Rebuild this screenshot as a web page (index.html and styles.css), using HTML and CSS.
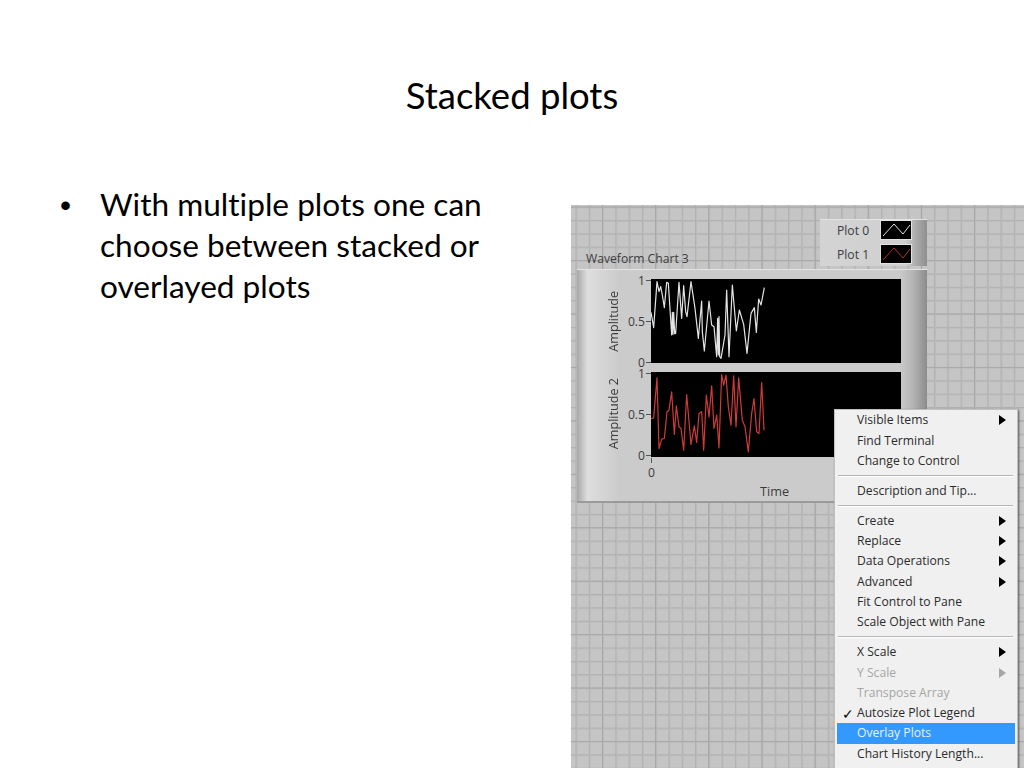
FILE: index.html
```html
<!DOCTYPE html>
<html lang="en">
<head>
<meta charset="utf-8">
<title>Stacked plots</title>
<link rel="stylesheet" href="styles.css">
</head>
<body>
<main class="slide">
  <h1 class="slide-title">Stacked plots</h1>
  <div class="slide-body">
    <ul class="bullets">
      <li>With multiple plots one can choose between stacked or overlayed plots</li>
    </ul>
    <figure class="canvas">
      <div class="legend">
        <div class="legend-row"><span>Plot 0</span>
          <svg class="swatch" viewBox="0 0 30 18"><polyline class="line-white" points="2,15 13,3 22,13 29,4"/></svg></div>
        <div class="legend-row"><span>Plot 1</span>
          <svg class="swatch" viewBox="0 0 30 18"><polyline class="line-red" points="2,15 13,3 22,13 29,4"/></svg></div>
      </div>
      <div class="chart-label">Waveform Chart 3</div>
      <div class="chart">
        <div class="plot-row plot-row-a">
          <div class="y-title"><span>Amplitude</span></div>
          <div class="ticks"><span>1</span><span>0.5</span><span>0</span></div>
          <svg class="plot" viewBox="18 12 750 252"><polyline class="line-white" points="18,112 26,158 36,20 42,50 47,35 52,60 58,98 65,22 70,25 80,180 82,112 84,178 86,112 89,176 92,175 102,22 110,130 116,32 122,110 126,125 138,20 150,100 160,190 170,78 172,170 178,228 192,78 200,150 207,155 215,245 218,130 220,240 222,125 224,245 228,250 240,180 245,45 252,245 262,30 274,168 283,105 296,148 306,235 318,115 328,98 334,172 341,72 348,90 358,38"/></svg>
        </div>
        <div class="plot-row plot-row-b">
          <div class="y-title"><span>Amplitude 2</span></div>
          <div class="ticks"><span>1</span><span>0.5</span><span>0</span></div>
          <svg class="plot" viewBox="18 12 750 252"><polyline class="line-red" points="18,150 26,148 36,28 42,240 50,212 58,210 66,130 72,125 80,70 88,198 94,112 102,175 108,180 116,245 125,78 138,228 148,172 155,222 162,135 170,130 176,245 184,80 192,145 200,52 207,180 215,140 222,238 230,18 236,50 243,20 250,115 258,170 266,22 273,175 281,28 292,155 300,175 310,250 320,135 327,90 335,190 342,195 350,42 357,185"/></svg>
        </div>
        <div class="x-axis"><span class="x-zero">0</span><span class="x-title">Time</span></div>
      </div>
      <div class="menu">
        <div class="item sub">Visible Items</div>
        <div class="item">Find Terminal</div>
        <div class="item">Change to Control</div>
        <hr class="sep">
        <div class="item">Description and Tip...</div>
        <hr class="sep">
        <div class="item sub">Create</div>
        <div class="item sub">Replace</div>
        <div class="item sub">Data Operations</div>
        <div class="item sub">Advanced</div>
        <div class="item">Fit Control to Pane</div>
        <div class="item">Scale Object with Pane</div>
        <hr class="sep">
        <div class="item sub">X Scale</div>
        <div class="item sub off">Y Scale</div>
        <div class="item off">Transpose Array</div>
        <div class="item checked">Autosize Plot Legend</div>
        <div class="item active">Overlay Plots</div>
        <div class="item">Chart History Length...</div>
        <hr class="sep">
      </div>
    </figure>
  </div>
</main>
</body>
</html>
```
FILE: styles.css
```css
html, body { margin: 0; height: 100%; background: #fff; }
.slide { width: 1024px; height: 768px; overflow: hidden; display: flex; flex-direction: column; font-family: Lato, "Liberation Sans", sans-serif; font-variant-ligatures: none; color: #000; }
.slide-title { margin: 0; padding-top: 70px; height: 134px; box-sizing: border-box; text-align: center; font-size: 36.5px; line-height: 50px; font-weight: 400; }
.slide-body { flex: 1; display: flex; min-height: 0; }
.bullets { list-style: none; margin: 0; padding: 50px 0 0 100px; width: 400px; box-sizing: content-box; flex: none; font-size: 31.6px; line-height: 41px; }
.bullets li { position: relative; }
.bullets li::before { content: "•"; position: absolute; left: -40px; top: 1px; font-family: "Liberation Sans", sans-serif; }
.canvas { margin: 71px 0 0 71px; flex: 1; position: relative; overflow: hidden; font-family: "Open Sans", sans-serif; color: #3c3c3c; font-size: 12.15px;
  background-color: #c5c5c5;
  background-image:
    linear-gradient(to right, #a6a6a6 1px, transparent 1px),
    linear-gradient(to bottom, #a9a9a9 1px, transparent 1px),
    linear-gradient(to right, #b1b1b1 1px, #bcbcbc 1px, #bcbcbc 2px, transparent 2px),
    linear-gradient(to bottom, #b1b1b1 1px, #bcbcbc 1px, #bcbcbc 2px, transparent 2px);
  background-size: 53.16px 53.44px, 53.44px 53.44px, 13.29px 13.36px, 13.29px 13.36px;
  background-position: 31px 0, 0 1.6px, 4.5px 0, 0 1.6px; }
.legend { position: absolute; left: 249px; top: 14px; width: 107px; height: 47px; box-sizing: border-box; padding: 0 0 0 17px; display: flex; flex-direction: column; gap: 2px; background: linear-gradient(to right, #d4d4d4, #cfcfcf 80%, #aaa 90%, #8f8f8f); box-shadow: inset 0 1px 0 #e4e4e4; }
.legend-row { display: flex; align-items: center; gap: 12px; height: 22px; }
.swatch { width: 30px; height: 18px; background: #000; box-shadow: 0 0 0 1px #e2e2e2; }
.chart-label { position: absolute; left: 15px; top: 45px; line-height: 18px; }
.chart { position: absolute; left: 6px; top: 64px; width: 350px; height: 234px; box-sizing: border-box; background: linear-gradient(to right, #a8a8a8, #dedede 3%, #cbcbcb 12%, #cbcbcb 92%, #b4b4b4 96%, #8c8c8c); border-top: 1px solid #e4e4e4; border-bottom: 2px solid #9a9a9a; }
.plot-row { position: absolute; left: 0; width: 324px; height: 84px; display: flex; justify-content: flex-end; }
.plot-row-a { top: 9px; }
.plot-row-b { top: 102px; height: 85px; }
.plot { width: 250px; height: 84px; background: #000; flex: none; }
.plot-row-b .plot { height: 85px; }
.ticks { position: relative; width: 0; flex: none; }
.ticks span { position: absolute; right: 6px; line-height: 14px; }
.ticks span::after { content: ""; position: absolute; left: 100%; margin-left: 1px; top: 6px; width: 5px; height: 1px; background: #555; }
.ticks span:nth-child(1) { top: -5px; }
.ticks span:nth-child(2) { top: 36px; }
.ticks span:nth-child(3) { top: 77px; }
.y-title { position: absolute; left: 28px; top: 0; height: 84px; width: 16px; display: flex; align-items: center; justify-content: center; font-size: 12.6px; }
.y-title span { writing-mode: vertical-rl; transform: rotate(180deg); white-space: nowrap; }
.plot polyline { filter: blur(.4px); }
.line-white, .line-red { fill: none; stroke-width: 3.6; stroke-linejoin: round; }
.line-white { stroke: #e4e4e4; }
.line-red { stroke: #cf3a3a; }
.swatch .line-white, .swatch .line-red { stroke-width: 1; }
.swatch .line-red { stroke: #b03030; }
.x-axis { position: absolute; left: 0; top: 195px; width: 100%; height: 30px; }
.x-axis::before { content: ""; position: absolute; left: 74px; top: -7px; width: 1px; height: 5px; background: #555; }
.x-zero { position: absolute; left: 71px; top: 1px; line-height: 14px; }
.x-title { position: absolute; left: 183px; top: 17px; line-height: 18px; font-size: 12.7px; }
.menu { position: absolute; left: 263px; top: 204px; width: 184px; box-sizing: border-box; padding: .4px 2px 0; background: #f0f0f0; border: 1px solid #c0c0c0; box-shadow: 1px 1px 2px rgba(0,0,0,.55); color: #2c2c2c; }
.item { position: relative; height: 20.25px; line-height: 20.25px; padding-left: 20px; white-space: nowrap; }
.sub::after { content: ""; position: absolute; right: 9px; top: 5px; border-left: 7px solid #000; border-top: 5.5px solid transparent; border-bottom: 5.5px solid transparent; }
.off { color: #a6a6a6; }
.off.sub::after { border-left-color: #a6a6a6; }
.checked::before { content: "✓"; position: absolute; left: 5px; top: 1px; font-size: 14px; color: #000; }
.active { background: #3399ff; color: #e8f2ff; }
.sep { margin: 4px 2px 3.8px 1px; border: 0; border-top: 1px solid #b4b4b4; border-bottom: 1px solid #fff; }
```
